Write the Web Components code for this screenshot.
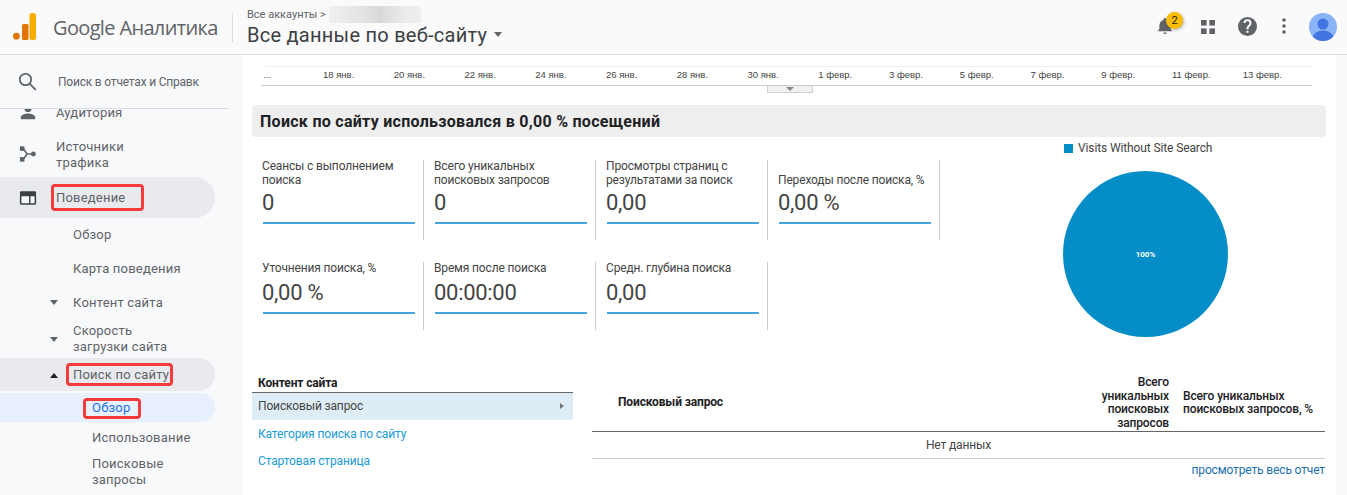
<!DOCTYPE html>
<html lang="ru">
<head>
<meta charset="utf-8">
<title>Google Аналитика</title>
<style>
  html, body { margin: 0; height: 100%; overflow: hidden; background: #fff; font-family: Roboto, "Liberation Sans", sans-serif; }
</style>
</head>
<body>
<ga-app>
  <ga-header slot="header"></ga-header>
  <ga-sidebar slot="sidebar">
    <ga-nav-item level="1" h="34" class="first">
      <svg slot="icon" width="18" height="18" viewBox="0 0 20 20" fill="#5f6368"><circle cx="10" cy="5" r="4"/><path d="M2 17v-2c0-3 5-4.500 8-4.500s8 1.500 8 4.500v2z"/></svg>
      Аудитория
    </ga-nav-item>
    <ga-nav-item level="1" h="47" nudge>
      <svg slot="icon" width="18" height="18" viewBox="0 0 20 20" fill="#5f6368"><rect x="1" y="1.500" width="5" height="5"/><rect x="1" y="13.500" width="5" height="5"/><circle cx="16" cy="10" r="2.700"/><path d="M4 3l5 7-5 7M9 10h7" fill="none" stroke="#5f6368" stroke-width="1.800"/></svg>
      Источники<br>трафика
    </ga-nav-item>
    <ga-nav-item level="1" h="41" open>
      <svg slot="icon" width="18" height="18" viewBox="0 0 20 20"><path d="M2.500 2.500h15a1.500 1.500 0 0 1 1.500 1.500v12a1.500 1.500 0 0 1-1.500 1.500h-15A1.500 1.500 0 0 1 1 16V4a1.500 1.500 0 0 1 1.500-1.500z" fill="#3c4043"/><path d="M2.700 8h8.500v7.800H2.700zM12.800 8h4.500v7.800h-4.500z" fill="#f8f9fa"/></svg>
      <ga-mark style="--t:-6px;--r:-19px;--b:-5px;--l:-5px">Поведение</ga-mark>
    </ga-nav-item>
    <ga-nav-item level="2" h="33">Обзор</ga-nav-item>
    <ga-nav-item level="2" h="34" nudge>Карта поведения</ga-nav-item>
    <ga-nav-item level="2" h="34" arrow="down" nudge>Контент сайта</ga-nav-item>
    <ga-nav-item level="2" h="39" arrow="down">Скорость<br>загрузки сайта</ga-nav-item>
    <ga-nav-item level="2" h="33" arrow="up" open><ga-mark style="--t:-4px;--r:-4px;--b:-3px;--l:-7px">Поиск по сайту</ga-mark></ga-nav-item>
    <ga-nav-item level="3" h="29" active class="gap"><ga-mark style="--t:-2px;--r:-11px;--b:-3px;--l:-9px">Обзор</ga-mark></ga-nav-item>
    <ga-nav-item level="3" h="30" nudge>Использование</ga-nav-item>
    <ga-nav-item level="3" h="38" nudge>Поисковые<br>запросы</ga-nav-item>
  </ga-sidebar>
  <ga-timeline slot="main"></ga-timeline>
  <ga-title slot="main">Поиск по сайту использовался в 0,00 % посещений</ga-title>
  <ga-summary slot="main">
    <ga-metric label="Сеансы с выполнением поиска" value="0"></ga-metric>
    <ga-metric label="Всего уникальных поисковых запросов" value="0"></ga-metric>
    <ga-metric label="Просмотры страниц с результатами за поиск" value="0,00"></ga-metric>
    <ga-metric label="Переходы после поиска, %" value="0,00 %"></ga-metric>
    <ga-metric compact label="Уточнения поиска, %" value="0,00 %"></ga-metric>
    <ga-metric compact label="Время после поиска" value="00:00:00"></ga-metric>
    <ga-metric compact label="Средн. глубина поиска" value="0,00"></ga-metric>
    <ga-pie slot="chart"></ga-pie>
  </ga-summary>
  <ga-report slot="main"></ga-report>
</ga-app>

<script>
class GaApp extends HTMLElement {
  constructor() {
    super();
    this.attachShadow({ mode: 'open' });
    this.shadowRoot.innerHTML = `
      <style>
        :host { display: flex; flex-direction: column; width: 100%; height: 495px; background: #f8f9fa; overflow: hidden; }
        .body { flex: 1; display: flex; min-height: 0; }
        main { flex: 1; min-width: 0; background: #fff; margin-right: 11px; padding: 0 10px 0 9px; overflow: hidden; }
      </style>
      <slot name="header"></slot>
      <div class="body">
        <slot name="sidebar"></slot>
        <main><slot name="main"></slot></main>
      </div>`;
  }
}

class GaHeader extends HTMLElement {
  constructor() {
    super();
    this.attachShadow({ mode: 'open' });
    this.shadowRoot.innerHTML = `
      <style>
        :host { display: flex; align-items: center; height: 54px; flex: none; background: #fafafa; border-bottom: 1px solid #dadce0; font-family: Roboto, "Liberation Sans", sans-serif; }
        .logo { margin-left: 13px; margin-bottom: 1px; flex: none; display: block; }
        .brand { margin-left: 17px; width: 179px; font-size: 20px; color: #5f6368; white-space: nowrap; font-family: "Open Sans", Roboto, sans-serif; letter-spacing: -.65px; }
        .sep { width: 1px; height: 29px; background: #dadce0; margin-top: 1px; }
        .view { margin-left: 14px; display: flex; flex-direction: column; margin-top: -2px; }
        .crumb { display: flex; align-items: center; height: 18px; font-size: 11px; color: #5f6368; margin-top: 1px; white-space: nowrap; }
        .blur { width: 92px; height: 17px; margin-left: 3px; background: linear-gradient(90deg, #f0f0f0, #e2e2e2 40%, #d8d8d8 55%, #eaeaea 80%, #efefef); }
        .title { display: flex; align-items: center; font-size: 20px; line-height: 26px; margin-top: -2px; color: #3c4043; letter-spacing: .26px; white-space: nowrap; }
        .caret { margin-left: 7px; width: 0; height: 0; border: 4.500px solid transparent; border-top: 5px solid #5f6368; border-bottom: 0; }
        .tools { margin-left: auto; display: flex; align-items: center; height: 100%; }
        .bell { position: relative; width: 16px; height: 18px; margin-right: 28px; margin-bottom: 2px; }
        .badge { position: absolute; left: 9px; top: -5px; width: 17px; height: 17px; border-radius: 50%; background: #fbbc04; color: #202124; font-size: 11px; line-height: 17px; text-align: center; box-shadow: 1px 1px 3px rgba(0,0,0,.3); }
        svg { display: block; flex: none; }
      </style>
      <svg class="logo" width="23" height="27" viewBox="0 0 23 27">
        <circle cx="3.400" cy="23.200" r="3.400" fill="#e37400"/>
        <rect x="9" y="11" width="6.500" height="16" rx="1.500" fill="#e37400"/>
        <rect x="16.500" y="0" width="6.500" height="27" rx="2.500" fill="#f9ab00"/>
      </svg>
      <span class="brand">Google Аналитика</span>
      <span class="sep"></span>
      <div class="view">
        <div class="crumb">Все аккаунты &gt;<span class="blur"></span></div>
        <div class="title">Все данные по веб-сайту<span class="caret"></span></div>
      </div>
      <div class="tools">
        <div class="bell">
          <svg width="16" height="18" viewBox="0 0 20 22" fill="#5f6368"><path d="M10 1a2 2 0 0 1 2 2v.400c3 .9 5 3.600 5 6.900v4.700l2.500 2.500H.5L3 15v-4.700C3 7 5 4.300 8 3.400V3a2 2 0 0 1 2-2zM8 19h4a2 2 0 0 1-4 0z"/></svg>
          <span class="badge">2</span>
        </div>
        <svg width="14" height="14" viewBox="0 0 15 15" fill="#5f6368" style="margin-right:23px"><rect width="6" height="6"/><rect x="9" width="6" height="6"/><rect y="9" width="6" height="6"/><rect x="9" y="9" width="6" height="6"/></svg>
        <svg width="19" height="19" viewBox="0 0 24 24" style="margin-right:25px;margin-bottom:2px"><path fill="#5f6368" d="M12 0a12 12 0 1 0 0 24 12 12 0 0 0 0-24zm1.300 20h-2.600v-2.600h2.600zm2.700-9.300-1.200 1.200c-1 1-1.500 1.800-1.500 3.600h-2.600v-.6c0-1.500.5-2.800 1.500-3.800l1.600-1.600c.5-.5.700-1.100.7-1.800a2.500 2.500 0 0 0-5 0H7a5 5 0 0 1 10 0c0 1.100-.4 2.100-1 3z"/></svg>
        <svg width="4" height="16" viewBox="0 0 4 16" fill="#5f6368" style="margin-right:23px;margin-bottom:2px"><circle cx="2" cy="2" r="1.800"/><circle cx="2" cy="8" r="1.800"/><circle cx="2" cy="14" r="1.800"/></svg>
        <svg width="28" height="28" viewBox="0 0 28 28" style="margin-right:10px"><defs><clipPath id="av"><circle cx="14" cy="14" r="14"/></clipPath></defs><circle cx="14" cy="14" r="14" fill="#8ab4f8"/><g clip-path="url(#av)" fill="#4374e0"><circle cx="14" cy="11" r="5.500"/><ellipse cx="14" cy="24" rx="10" ry="6.500"/></g></svg>
      </div>`;
  }
}

class GaSidebar extends HTMLElement {
  constructor() {
    super();
    this.attachShadow({ mode: 'open' });
    this.shadowRoot.innerHTML = `
      <style>
        :host { display: flex; flex-direction: column; width: 243px; flex: none; background: #f8f9fa; font-family: Roboto, "Liberation Sans", sans-serif; }
        .search { position: relative; z-index: 1; display: flex; align-items: center; height: 53px; width: 229px; flex: none; background: #f8f9fa; border-bottom: 1px solid #dadce0; }
        .search svg { margin-left: 18px; flex: none; }
        .search span { margin-left: 21px; white-space: nowrap; font-size: 12px; letter-spacing: -.2px; color: #5f6368; }
        nav { flex: 1; overflow: hidden; min-height: 0; }
        .scroll { margin-top: -13px; width: 215px; }
      </style>
      <div class="search">
        <svg width="19" height="19" viewBox="0 0 19 19" fill="none" stroke="#5f6368" stroke-width="1.800"><circle cx="7.500" cy="7.500" r="5.700"/><path d="M11.800 11.800l6 6"/></svg>
        <span>Поиск в отчетах и Справк</span>
      </div>
      <nav><div class="scroll"><slot></slot></div></nav>`;
  }
}

class GaNavItem extends HTMLElement {
  constructor() {
    super();
    this.attachShadow({ mode: 'open' });
  }

  connectedCallback() {
    const level = this.getAttribute('level') || '1';
    const h = this.getAttribute('h') || '34';
    const arrow = this.getAttribute('arrow');
    const pad = { 1: 56, 2: 73, 3: 92 }[level];
    const gap = this.classList.contains('gap') ? 'margin-top: 2px;' : '';
    const nudge = this.hasAttribute('nudge') ? 'padding-top: 2px;' : '';
    const bg = this.hasAttribute('active') ? '#e8f0fe' : this.hasAttribute('open') ? '#e8eaed' : 'transparent';
    const color = this.hasAttribute('active') ? '#1a73e8' : '#5f6368';
    let mark = '';
    if (arrow === 'down') mark = '<i style="border-top: 5px solid #5f6368"></i>';
    if (arrow === 'up') mark = '<i style="border-bottom: 5px solid #202124"></i>';
    this.shadowRoot.innerHTML = `
      <style>
        :host { display: flex; align-items: center; position: relative; box-sizing: border-box; height: ${h}px; ${gap} ${nudge} padding-left: ${pad}px; background: ${bg}; color: ${color}; border-radius: 0 21px 21px 0; font-size: 13px; line-height: 16px; letter-spacing: .2px; }
        .icon { position: absolute; left: 19px; top: 50%; transform: translateY(-50%); display: flex; }
        i { position: absolute; left: 50px; top: 50%; margin-top: -2px; width: 0; height: 0; border-left: 4px solid transparent; border-right: 4px solid transparent; }
      </style>
      <span class="icon"><slot name="icon"></slot></span>
      ${mark}
      <span><slot></slot></span>`;
  }
}

class GaMark extends HTMLElement {
  constructor() {
    super();
    this.attachShadow({ mode: 'open' });
    this.shadowRoot.innerHTML = `
      <style>
        :host { display: inline-block; position: relative; white-space: nowrap; }
        :host::after { content: ""; position: absolute; top: var(--t); right: var(--r); bottom: var(--b); left: var(--l); border: 3px solid #f43a3a; border-radius: 4px; }
      </style>
      <slot></slot>`;
  }
}

class GaTimeline extends HTMLElement {
  constructor() {
    super();
    this.attachShadow({ mode: 'open' });
    const dates = ['18 янв.', '20 янв.', '22 янв.', '24 янв.', '26 янв.', '28 янв.', '30 янв.', '1 февр.', '3 февр.', '5 февр.', '7 февр.', '9 февр.', '11 февр.', '13 февр.'];
    this.shadowRoot.innerHTML = `
      <style>
        :host { display: block; margin: 11px 14px 0 9px; font-family: "Liberation Sans", Arial, sans-serif; }
        .row { display: flex; box-sizing: border-box; height: 20px; align-items: center; padding: 0 0 2px 2px; border-bottom: 1px solid #ccc; position: relative; font-size: 9.500px; color: #444; white-space: nowrap; }
        .row::before { content: ""; position: absolute; left: 4px; right: 0; top: 0; height: 1px; background: #eee; }
        .first { width: 60px; flex: none; }
        .d { width: 70.750px; flex: none; }
        .handle { width: 44px; height: 6px; margin-left: 506px; background: #f1f1f1; border: 1px solid #d0d0d0; border-top: 0; position: relative; }
        .handle::after { content: ""; position: absolute; left: 18px; top: 1px; border: 4px solid transparent; border-top: 4px solid #888; border-bottom: 0; }
      </style>
      <div class="row"><span class="first">...</span>${dates.map(d => `<span class="d">${d}</span>`).join('')}</div>
      <div class="handle"></div>`;
  }
}

class GaTitle extends HTMLElement {
  constructor() {
    super();
    this.attachShadow({ mode: 'open' });
    this.shadowRoot.innerHTML = `
      <style>
        :host { display: flex; align-items: center; height: 32px; margin-top: 12px; padding-left: 8px; background: #eee; border-radius: 4px; font-size: 16px; font-weight: 700; letter-spacing: .28px; color: #202124; white-space: nowrap; }
      </style>
      <slot></slot>`;
  }
}

class GaSummary extends HTMLElement {
  constructor() {
    super();
    this.attachShadow({ mode: 'open' });
    this.shadowRoot.innerHTML = `
      <style>
        :host { display: flex; }
        .grid { display: grid; grid-template-columns: repeat(4, 172px); grid-auto-rows: min-content; row-gap: 22px; margin-top: 23px; }
        .chart { margin-left: 123px; margin-top: 4px; }
      </style>
      <div class="grid"><slot></slot></div>
      <div class="chart"><slot name="chart"></slot></div>`;
  }
}

class GaMetric extends HTMLElement {
  constructor() {
    super();
    this.attachShadow({ mode: 'open' });
  }

  connectedCallback() {
    const compact = this.hasAttribute('compact');
    this.shadowRoot.innerHTML = `
      <style>
        :host { display: block; box-sizing: border-box; height: ${compact ? 68 : 80}px; padding-left: 10px; border-right: 1px solid #ccc; font-family: Roboto, "Liberation Sans", sans-serif; }
        .label { display: flex; align-items: flex-end; box-sizing: border-box; height: ${compact ? 13 : 27}px; padding-right: 10px; font-size: 12px; line-height: 13.500px; letter-spacing: -.16px; color: #444; }
        .value { font-size: 22px; line-height: 26px; margin-top: ${compact ? 5 : 3}px; letter-spacing: -.3px; color: #444; white-space: nowrap; }
        .bar { width: 152px; height: 2px; margin: 6px 0 0 1px; background: #45a5d8; }
      </style>
      <div class="label">${this.getAttribute('label')}</div>
      <div class="value">${this.getAttribute('value')}</div>
      <div class="bar"></div>`;
  }
}

class GaPie extends HTMLElement {
  constructor() {
    super();
    this.attachShadow({ mode: 'open' });
    this.shadowRoot.innerHTML = `
      <style>
        :host { display: block; width: 170px; font-family: Roboto, "Liberation Sans", sans-serif; }
        .legend { display: flex; align-items: center; height: 14px; margin-left: 1px; font-size: 12px; letter-spacing: -.12px; color: #444; white-space: nowrap; }
        .legend b { width: 9px; height: 9px; background: #058dc7; margin-right: 5px; }
        .disc { display: flex; align-items: center; justify-content: center; width: 165px; height: 166px; margin-top: 16px; border-radius: 50%; background: #058dc7; color: #fff; font-size: 8px; font-weight: 700; }
      </style>
      <div class="legend"><b></b>Visits Without Site Search</div>
      <div class="disc">100%</div>`;
  }
}

class GaReport extends HTMLElement {
  constructor() {
    super();
    this.attachShadow({ mode: 'open' });
    this.shadowRoot.innerHTML = `
      <style>
        :host { display: flex; gap: 19px; margin-top: 38px; font-family: Roboto, "Liberation Sans", sans-serif; font-size: 12px; letter-spacing: -.14px; }
        .side { width: 321px; flex: none; }
        .side h4 { margin: 0; box-sizing: border-box; height: 18px; padding: 1px 0 0 6px; font-size: 12px; line-height: 15px; font-weight: 700; color: #202124; border-bottom: 1px solid #666; }
        .side div { display: flex; align-items: center; justify-content: space-between; box-sizing: border-box; height: 27px; padding: 0 9px 0 6px; color: #1a9ad6; }
        .side .sel { background: #deedf5; color: #444; padding-bottom: 2px; }
        .sel::after { content: ""; border: 3px solid transparent; border-left: 4px solid #777; border-right: 0; }
        .table { flex: 1; min-width: 0; margin-right: 1px; }
        .head { display: grid; grid-template-columns: 1fr 86px 142px; height: 57px; box-sizing: border-box; border-bottom: 1px solid #666; line-height: 13.500px; font-weight: 500; color: #202124; }
        .head > div { display: flex; align-items: center; }
        .head .q { padding-left: 26px; font-weight: 700; }
        .head .n { justify-content: flex-end; text-align: right; align-items: flex-end; padding: 0 14px 1px 0; margin-left: -14px; }
        .none { height: 26px; line-height: 26px; text-align: center; color: #444; border-bottom: 1px solid #ccc; }
        .all { display: block; text-align: right; margin-top: 4px; color: #1a6fb0; text-decoration: none; }
      </style>
      <div class="side">
        <h4>Контент сайта</h4>
        <div class="sel">Поисковый запрос</div>
        <div>Категория поиска по сайту</div>
        <div>Стартовая страница</div>
      </div>
      <div class="table">
        <div class="head">
          <div class="q">Поисковый запрос</div>
          <div class="n">Всего<br>уникальных<br>поисковых<br>запросов</div>
          <div>Всего уникальных поисковых запросов, %</div>
        </div>
        <div class="none">Нет данных</div>
        <a class="all" href="#">просмотреть весь отчет</a>
      </div>`;
  }
}

customElements.define('ga-app', GaApp);
customElements.define('ga-header', GaHeader);
customElements.define('ga-sidebar', GaSidebar);
customElements.define('ga-nav-item', GaNavItem);
customElements.define('ga-mark', GaMark);
customElements.define('ga-timeline', GaTimeline);
customElements.define('ga-title', GaTitle);
customElements.define('ga-summary', GaSummary);
customElements.define('ga-metric', GaMetric);
customElements.define('ga-pie', GaPie);
customElements.define('ga-report', GaReport);
</script>
</body>
</html>
